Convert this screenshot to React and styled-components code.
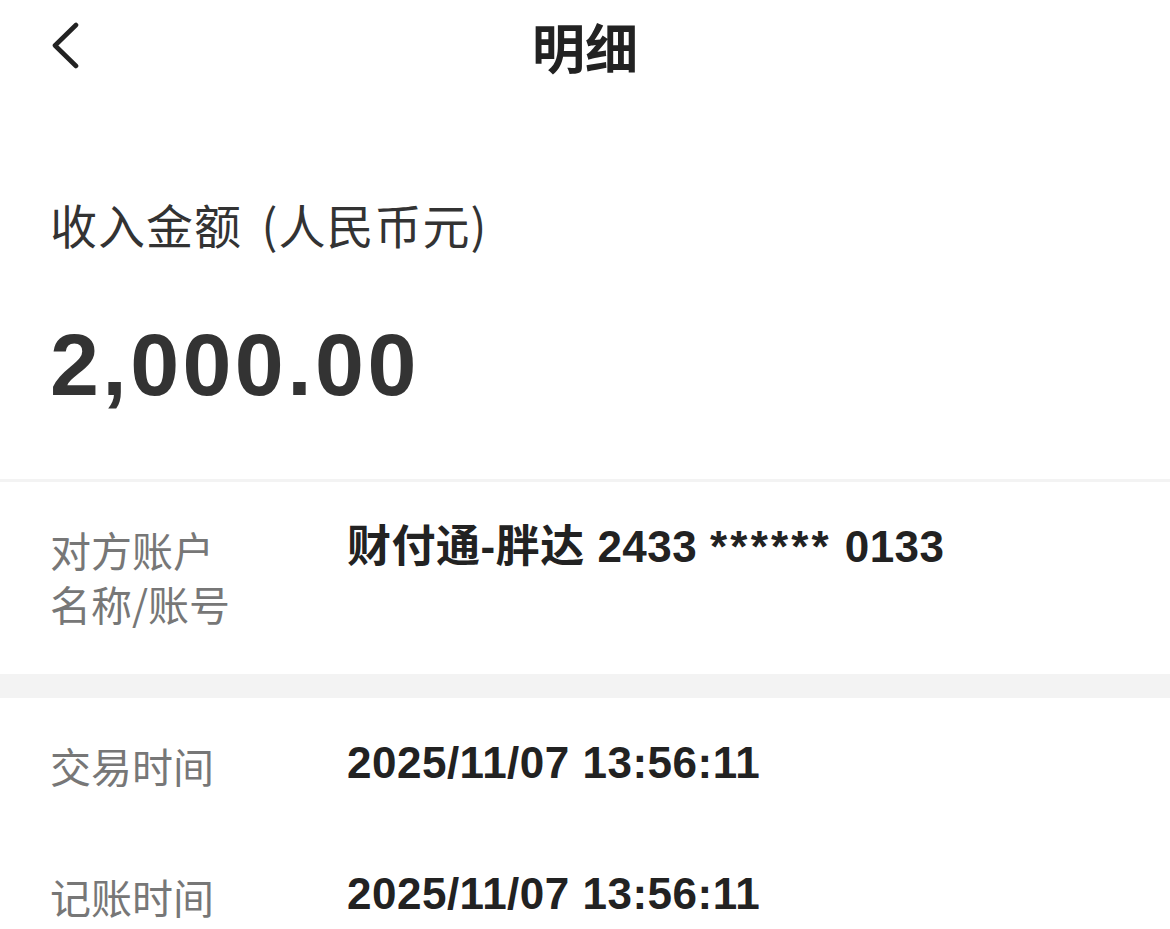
import React from 'react';
import styled, { createGlobalStyle } from 'styled-components';

const GlobalStyle = createGlobalStyle`
  html, body {
    margin: 0;
    padding: 0;
    background: #ffffff;
  }
  body {
    font-family: "Liberation Sans", "Noto Sans CJK SC", sans-serif;
    color: #222222;
  }
`;

const Page = styled.div`
  width: 1170px;
  min-height: 929px;
  background: #ffffff;
`;

const NavBar = styled.header`
  display: grid;
  grid-template-columns: 1fr auto 1fr;
  align-items: center;
  height: 92px;
`;

const BackButton = styled.button`
  justify-self: start;
  display: flex;
  align-items: center;
  margin-left: 48px;
  padding: 0;
  border: none;
  background: none;
  color: #222222;
  cursor: pointer;
`;

const Title = styled.h1`
  margin: 0;
  font-family: "Noto Sans CJK SC", sans-serif;
  font-size: 53px;
  font-weight: 700;
  line-height: 56px;
  color: #222222;
`;

const Summary = styled.section`
  padding: 104px 50px 64px;
`;

const SummaryLabel = styled.p`
  margin: 0;
  font-family: "Noto Sans CJK SC", sans-serif;
  font-size: 47px;
  font-weight: 400;
  line-height: 56px;
  letter-spacing: 1px;
  word-spacing: 8px;
  color: #333333;
`;

const Amount = styled.p`
  margin: 63px 0 0;
  font-family: "Liberation Sans", sans-serif;
  font-size: 88px;
  font-weight: 700;
  line-height: 100px;
  letter-spacing: 3.4px;
  color: #333333;
`;

const Divider = styled.div`
  height: ${(p) => p.size}px;
  background: #f3f3f3;
`;

const Group = styled.section`
  padding-bottom: ${(p) => p.extra || 0}px;
`;

const Row = styled.div`
  display: grid;
  grid-template-columns: 297px 1fr;
  padding: 40px 50px 37px;
`;

const Label = styled.div`
  font-family: "Noto Sans CJK SC", sans-serif;
  font-size: 41px;
  font-weight: 400;
  line-height: 54px;
  color: #777777;
`;

const LabelLine = styled.span`
  display: block;
`;

const Value = styled.div`
  font-family: "Liberation Sans", "Noto Sans CJK SC", sans-serif;
  font-size: 44px;
  font-weight: 700;
  line-height: 54px;
  letter-spacing: 0.5px;
  color: #222222;
  margin-top: -2px;
`;

const Mask = styled.span`
  letter-spacing: 3.2px;
`;

function ChevronLeft() {
  return (
    <svg width="34" height="48" viewBox="0 0 34 48" fill="none">
      <path
        d="M28 4 L7 24.5 L28 45"
        stroke="currentColor"
        strokeWidth="4.6"
        strokeLinecap="round"
        strokeLinejoin="round"
        transform="translate(0 -1)"
      />
    </svg>
  );
}

const details = [
  { label: '交易时间', value: '2025/11/07 13:56:11' },
  { label: '记账时间', value: '2025/11/07 13:56:11' },
];

export default function App() {
  return (
    <Page>
      <GlobalStyle />
      <NavBar>
        <BackButton aria-label="返回">
          <ChevronLeft />
        </BackButton>
        <Title>明细</Title>
        <span />
      </NavBar>

      <Summary>
        <SummaryLabel>收入金额 (人民币元)</SummaryLabel>
        <Amount>2,000.00</Amount>
      </Summary>

      <Divider size={3} />

      <Group extra={7}>
        <Row>
          <Label>
            <LabelLine>对方账户</LabelLine>
            <LabelLine>名称/账号</LabelLine>
          </Label>
          <Value>
            财付通-胖达 2433 <Mask>******</Mask> 0133
          </Value>
        </Row>
      </Group>

      <Divider size={24} />

      <Group>
        {details.map((item) => (
          <Row key={item.label}>
            <Label>
              <LabelLine>{item.label}</LabelLine>
            </Label>
            <Value>{item.value}</Value>
          </Row>
        ))}
      </Group>
    </Page>
  );
}
